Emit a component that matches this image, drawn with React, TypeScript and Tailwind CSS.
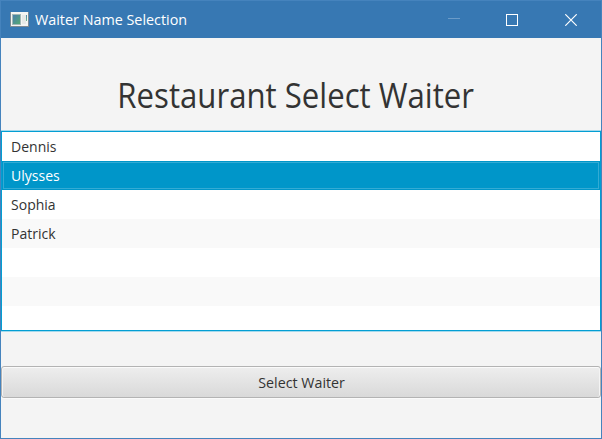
const rows = ["Dennis", "Ulysses", "Sophia", "Patrick", "", "", ""];

function AppIcon() {
  return (
    <svg width="19" height="16" viewBox="0 0 19 16" className="shrink-0" shapeRendering="crispEdges">
      <defs>
        <linearGradient id="pane" x1="0" y1="0" x2="1" y2="1">
          <stop offset="0" stopColor="#4a7fae" />
          <stop offset="1" stopColor="#55a873" />
        </linearGradient>
        <linearGradient id="strip" x1="0" y1="0" x2="0" y2="1">
          <stop offset="0" stopColor="#4f86b0" />
          <stop offset="1" stopColor="#6fb98a" />
        </linearGradient>
      </defs>
      <rect x="0" y="0" width="19" height="15" fill="#7d8a94" />
      <rect x="1" y="0" width="17" height="14" fill="#f5f5f3" />
      <rect x="2" y="2" width="9" height="11" fill="#a3b8b6" />
      <rect x="3" y="3" width="7" height="9" fill="url(#pane)" />
      <rect x="12" y="3" width="4" height="9" fill="#e6e9e7" />
      <rect x="16" y="3" width="1" height="6" fill="url(#strip)" />
    </svg>
  );
}

function TitleBar() {
  return (
    <header className="flex h-[37px] shrink-0 items-center bg-[#3778b3] pl-[9px] text-white">
      <AppIcon />
      <h1 className="ml-[6px] grow pb-[2px] whitespace-nowrap text-[15px] leading-5">
        <span className="inline-block origin-left scale-x-[0.957]">Waiter Name Selection</span>
      </h1>
      <svg width="12" height="12" className="mr-[46px]" shapeRendering="crispEdges">
        <rect x="0" y="4" width="12" height="1" fill="#6b9bc8" />
      </svg>
      <svg width="12" height="12" className="mr-[47px]" shapeRendering="crispEdges">
        <rect x="0.5" y="0.5" width="11" height="11" fill="none" stroke="#fff" />
      </svg>
      <svg width="12" height="12" className="mr-[24px]">
        <path d="M0.3 0.3 11.7 11.7M11.7 0.3 0.3 11.7" stroke="#fff" strokeWidth="1.2" />
      </svg>
    </header>
  );
}

export default function App() {
  return (
    <main className="flex h-[439px] w-[602px] flex-col overflow-hidden border border-[#4583bd] bg-[#f4f4f4] font-['Open_Sans','Noto_Sans',sans-serif] text-[#333]">
      <TitleBar />
      <h2 className="flex h-[92px] shrink-0 items-center justify-center whitespace-nowrap pr-[10px] pt-[22px] text-[34px] leading-none">
        <span className="inline-block scale-x-[0.916]">Restaurant Select Waiter</span>
      </h2>
      <div className="h-[202px] shrink-0 border-y border-[#a4d9ec]">
        <ul className="h-[200px] overflow-hidden border border-[#039ed3] bg-white">
          {rows.map((name, i) => (
            <li
              key={i}
              className={
                i === 1
                  ? "h-[29px] bg-[#0096c9] p-px text-white"
                  : i % 2
                    ? "h-[29px] bg-[#f9f9f9] p-px"
                    : "h-[29px] bg-white p-px"
              }
            >
              <div
                className={
                  i === 1
                    ? "flex h-[27px] items-center border border-[#33abd4] pl-[7px] text-[15px]"
                    : "flex h-[27px] items-center border border-transparent pl-[7px] text-[15px]"
                }
              >
                <span className="inline-block origin-left scale-x-[0.935]">{name}</span>
              </div>
            </li>
          ))}
        </ul>
      </div>
      <button className="mt-[34px] flex h-[32px] shrink-0 items-center justify-center rounded-[3px] border border-[#b3b3b3] bg-linear-to-b from-[#eeeeee] to-[#d9d9d9] pl-[2px] text-[15px] leading-none shadow-[0_1px_0_#fafafa,inset_0_1px_0_#fafafa,inset_1px_0_0_#f4f4f4,inset_-1px_0_0_#f4f4f4]">
        <span className="inline-block scale-x-[0.95]">Select Waiter</span>
      </button>
    </main>
  );
}
